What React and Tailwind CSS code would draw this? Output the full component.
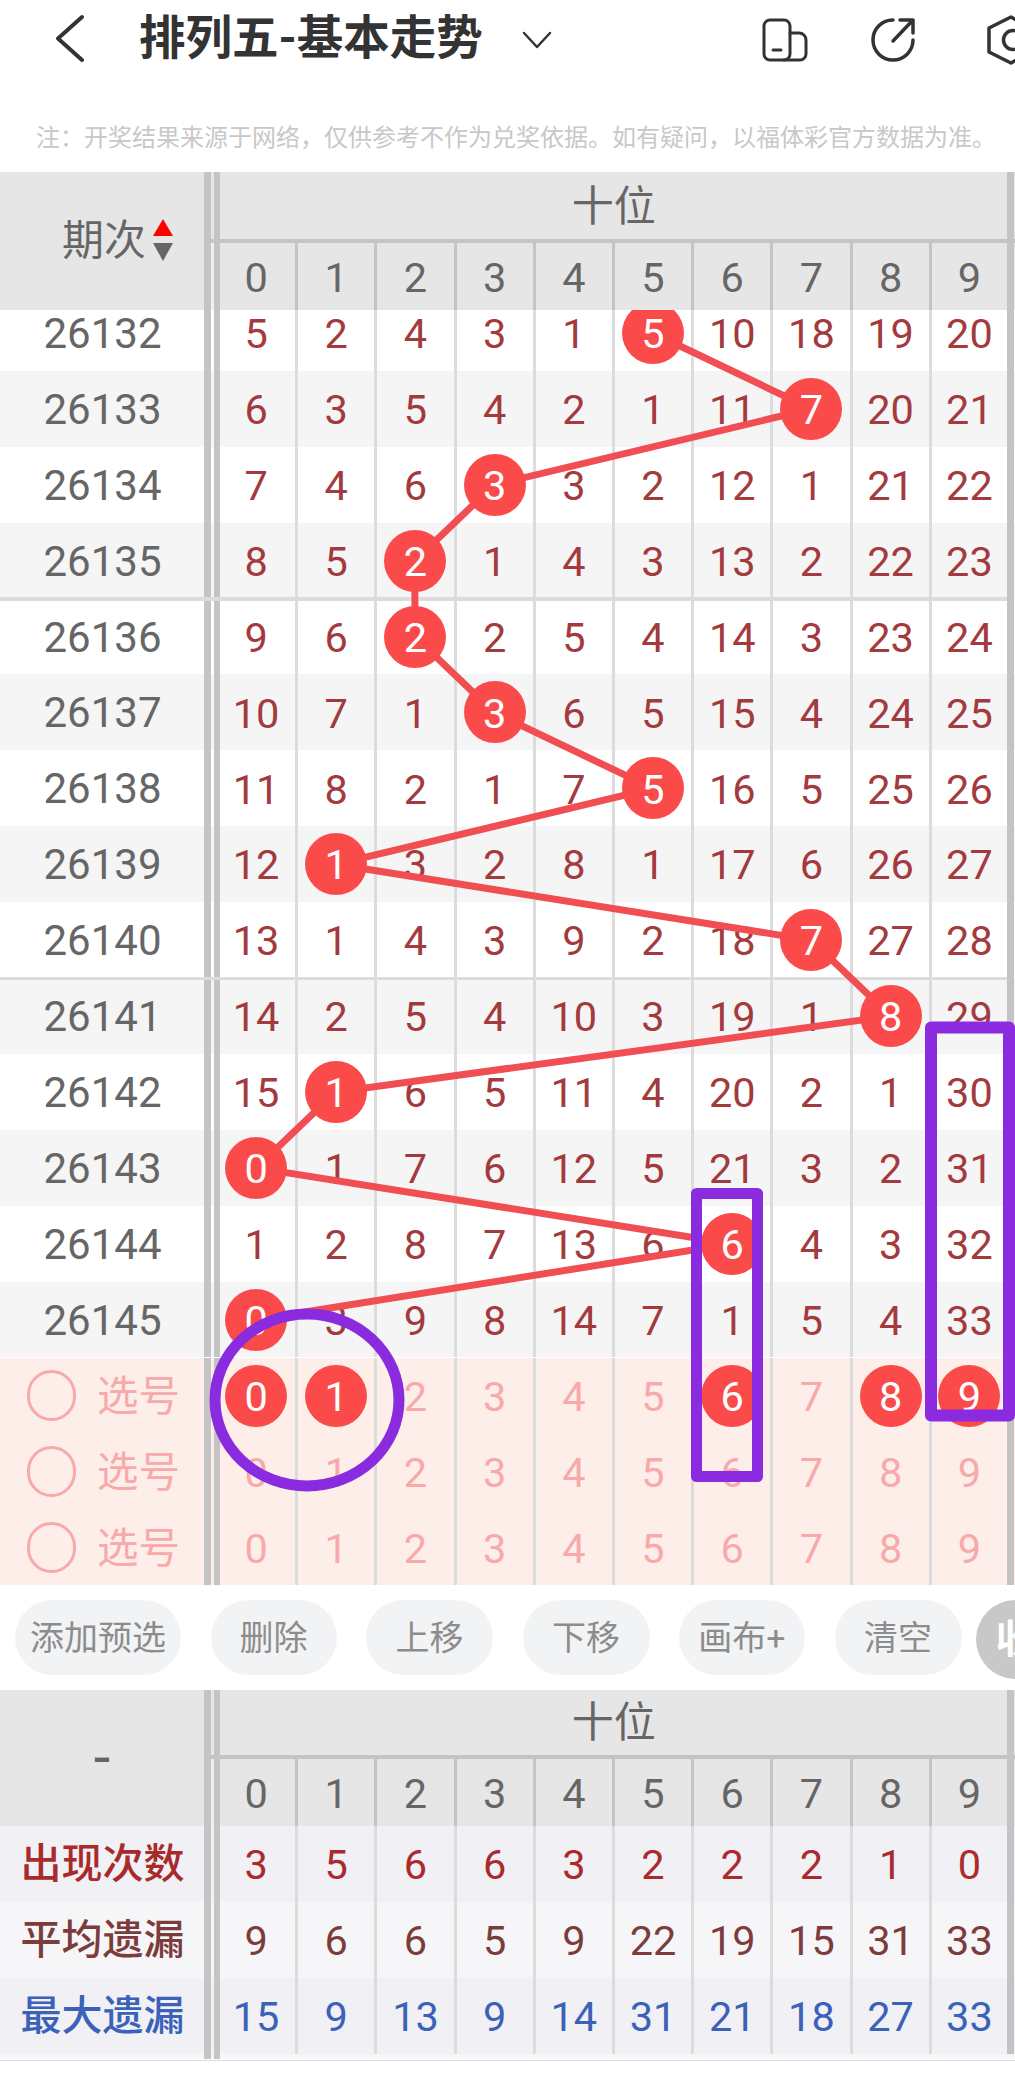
import React from 'react';

const rows = [
  [26132, [5, 2, 4, 3, 1, 5, 10, 18, 19, 20], 5],
  [26133, [6, 3, 5, 4, 2, 1, 11, 7, 20, 21], 7],
  [26134, [7, 4, 6, 3, 3, 2, 12, 1, 21, 22], 3],
  [26135, [8, 5, 2, 1, 4, 3, 13, 2, 22, 23], 2],
  [26136, [9, 6, 2, 2, 5, 4, 14, 3, 23, 24], 2],
  [26137, [10, 7, 1, 3, 6, 5, 15, 4, 24, 25], 3],
  [26138, [11, 8, 2, 1, 7, 5, 16, 5, 25, 26], 5],
  [26139, [12, 1, 3, 2, 8, 1, 17, 6, 26, 27], 1],
  [26140, [13, 1, 4, 3, 9, 2, 18, 7, 27, 28], 7],
  [26141, [14, 2, 5, 4, 10, 3, 19, 1, 8, 29], 8],
  [26142, [15, 1, 6, 5, 11, 4, 20, 2, 1, 30], 1],
  [26143, [0, 1, 7, 6, 12, 5, 21, 3, 2, 31], 0],
  [26144, [1, 2, 8, 7, 13, 6, 6, 4, 3, 32], 6],
  [26145, [0, 3, 9, 8, 14, 7, 1, 5, 4, 33], 0],
];

const digits = [0, 1, 2, 3, 4, 5, 6, 7, 8, 9];

const note = '注\uFF1A开奖结果来源于网络\uFF0C仅供参考不作为兑奖依据。如有疑问\uFF0C以福体彩官方数据为准。';

// trend line through the ball of every row, coords inside the scroll body
const trendPoints = rows
  .map(([, , ball], i) => `${256.3 + 79.3 * ball},${23 + 75.9 * i}`)
  .join(' ');

const Ball = ({ n }) => (
  <span className="relative z-20 flex h-[62px] w-[62px] items-center justify-center rounded-full bg-[#fb4a4a] pt-[2px] text-white">
    {n}
  </span>
);

// the ten number columns of a row
const Cells = ({ nums, ball, balls, text, line }) => (
  <div className={`grid h-full grid-cols-[78.2px_repeat(8,79.2px)_75.5px] ${text}`}>
    {nums.map((n, i) => {
      const isBall = balls ? balls.includes(i) : ball === i;
      return (
        <div
          key={i}
          className={`flex h-full items-center justify-center ${i < 9 ? `border-r-[3px] ${line}` : ''} ${i === 0 ? 'pr-[3px]' : ''}`}
        >
          {isBall ? <Ball n={n} /> : <span className="pt-[2px]">{n}</span>}
        </div>
      );
    })}
  </div>
);

// double bar between label column and numbers, plus the bar on the right
const Row = ({ label, bg, children }) => (
  <div className={`flex h-[75.9px] ${bg}`}>
    <div className="w-[204px] shrink-0">{label}</div>
    <div className="h-full w-[6.5px] shrink-0 bg-[#c4c4c4]" />
    <div className="h-full w-[3.5px] shrink-0" />
    <div className="h-full w-[6px] shrink-0 bg-[#c4c4c4]" />
    <div className="w-[787.3px] shrink-0">{children}</div>
    <div className="h-full w-[7px] shrink-0 bg-[#c4c4c4]" />
  </div>
);

const TableHead = ({ left, topH }) => (
  <div className="flex bg-[#e6e6e6]">
    <div className="w-[204px] shrink-0">{left}</div>
    <div className="w-[6.5px] shrink-0 bg-[#c4c4c4]" />
    <div className="flex-1">
      <div className={`flex ${topH}`}>
        <div className="w-[3.5px] shrink-0" />
        <div className="w-[6px] shrink-0 bg-[#c4c4c4]" />
        <div className="flex w-[787.3px] shrink-0 items-center justify-center pt-[2px] text-[42px] text-[#666]">十位</div>
        <div className="w-[7px] shrink-0 bg-[#c4c4c4]" />
      </div>
      <div className="h-[4px] bg-[#c4c4c4]" />
      <div className="flex h-[67px]">
        <div className="w-[3.5px] shrink-0 bg-[#f0f0f0]" />
        <div className="w-[6px] shrink-0 bg-[#c4c4c4]" />
        <div className="w-[787.3px] shrink-0">
          <Cells nums={digits} text="text-[#666]" line="border-[#c4c4c4]" />
        </div>
        <div className="w-[7px] shrink-0 bg-[#c4c4c4]" />
      </div>
    </div>
  </div>
);

const Pill = ({ w, children }) => (
  <div className={`flex h-[75px] shrink-0 items-center justify-center rounded-full bg-[#f2f3f5] text-[34px] text-[#8c8c8c] ${w}`}>
    {children}
  </div>
);

const StatRow = ({ label, labelColor, nums, text, bg }) => (
  <Row
    bg={bg}
    label={<div className={`flex h-full items-center justify-center pl-[1px] pt-[2px] text-[41px] font-medium ${labelColor}`}>{label}</div>}
  >
    <Cells nums={nums} text={text} line="border-[#dcdcdc]" />
  </Row>
);

const App = () => {
  return (
    <div className="relative h-[2074px] w-[1015px] overflow-hidden bg-white text-[41.5px] leading-none [font-family:Roboto,'Noto_Sans_CJK_SC',sans-serif]">
      {/* top bar */}
      <div className="flex h-[76px] items-center overflow-hidden pl-[56px]">
        <svg width="28" height="49" viewBox="0 0 28 49" fill="none" stroke="#333" strokeWidth="4" strokeLinecap="round" strokeLinejoin="round" className="shrink-0">
          <path d="M26 3 L2 24.500 L26 46" />
        </svg>
        <div className="ml-[55px] w-[343px] shrink-0 whitespace-nowrap text-[46.5px] font-bold text-[#333]">排列五-基本走势</div>
        <svg width="30" height="18" viewBox="0 0 30 18" fill="none" stroke="#333" strokeWidth="2.500" strokeLinecap="round" strokeLinejoin="round" className="ml-[40px] mt-[3px] shrink-0">
          <path d="M2 2 L15 16 L28 2" />
        </svg>
        <svg width="46" height="44" viewBox="0 0 46 44" fill="none" stroke="#333" strokeWidth="3" strokeLinecap="round" strokeLinejoin="round" className="ml-[210px] mt-[3px] shrink-0">
          <rect x="2" y="2" width="26" height="40" rx="6" />
          <path d="M28 15 H37 A7 7 0 0 1 44 22 V36 A6 6 0 0 1 38 42 H22" />
          <path d="M11 32 H19" />
        </svg>
        <svg width="46" height="46" viewBox="0 0 46 46" fill="none" stroke="#333" strokeWidth="3.500" strokeLinecap="round" strokeLinejoin="round" className="ml-[62px] mt-[3px] shrink-0">
          <path d="M23 3 A20 20 0 1 0 43 23" />
          <path d="M23 24 L43 3 M30 3 H43 V16" />
        </svg>
        <svg width="50" height="50" viewBox="0 0 50 50" fill="none" stroke="#333" strokeWidth="3.500" strokeLinecap="round" strokeLinejoin="round" className="ml-[70px] mt-[3px] shrink-0">
          <path d="M25 2 L45 13 V37 L25 48 L3 37 V13 Z" />
          <circle cx="27" cy="25" r="9.500" />
        </svg>
      </div>

      {/* disclaimer */}
      <div className="flex h-[96px] items-start whitespace-nowrap pl-[36px] pt-[50px] text-[24px] text-[#c8c8c8]">
        {note}
      </div>

      <TableHead
        topH="h-[67px]"
        left={
          <div className="flex h-full items-center pl-[62px] text-[42px] text-[#666]">
            <span>期次</span>
            <svg width="22" height="44" viewBox="0 0 22 44" className="ml-[6px] shrink-0">
              <path d="M11 0 L21 17 H1 Z" fill="#f00" />
              <path d="M1 24 H21 L11 42 Z" fill="#666" />
            </svg>
          </div>
        }
      />

      {/* scrolled history rows, first row is cut by the header */}
      <div className="relative h-[1047.700px] overflow-hidden">
        <div className="-mt-[15px]">
          {rows.map(([issue, nums, ball], i) => (
            <div key={issue} className="relative">
              <Row
                bg={i % 2 === 0 ? 'bg-white' : 'bg-[#f5f5f5]'}
                label={<div className="flex h-full items-center justify-center pl-[1px] pt-[2px] text-[42px] text-[#666]">{issue}</div>}
              >
                <Cells nums={nums} ball={ball} text="text-[#a33a3e]" line="border-[#dcdcdc]" />
              </Row>
              {(i === 3 || i === 8) && <div className="absolute -bottom-[2px] left-0 z-[1] h-[3.500px] w-[1007px] bg-[#dcdcdc]" />}
            </div>
          ))}
        </div>
        <svg className="pointer-events-none absolute left-0 top-0 z-10" width="1015" height="1048" viewBox="0 0 1015 1048" fill="none">
          <polyline points={trendPoints} stroke="#f04e52" strokeWidth="7" />
        </svg>
      </div>

      {/* picker rows */}
      {[[0, 1, 6, 8, 9], [], []].map((balls, i) => (
        <Row
          key={i}
          bg="bg-[#fdeee9]"
          label={
            <div className="flex h-full items-center pl-[27px] text-[41.5px] text-[#f8a9a9]">
              <span className="h-[51px] w-[49px] shrink-0 rounded-full border-[3px] border-[#f8a9a9]" />
              <span className="ml-[21px] pt-[2px]">选号</span>
            </div>
          }
        >
          <Cells nums={digits} balls={balls} text="text-[#f8a9a9]" line="border-[#dcdcdc]" />
        </Row>
      ))}

      {/* action buttons */}
      <div className="flex h-[104.600px] items-start gap-[29.500px] overflow-hidden pl-[15px] pt-[15px]">
        <Pill w="w-[166px]">添加预选</Pill>
        <Pill w="w-[126px]">删除</Pill>
        <Pill w="w-[127px]">上移</Pill>
        <Pill w="w-[127px]">下移</Pill>
        <Pill w="w-[126px]">画布+</Pill>
        <Pill w="w-[127px]">清空</Pill>
        <div className="-ml-[15px] flex h-[79px] w-[79px] shrink-0 items-center justify-center rounded-full bg-[#c8c8c8] text-[40px] font-bold text-white">收</div>
      </div>

      <TableHead
        topH="h-[65px]"
        left={<div className="flex h-full items-center justify-center text-[60px] text-[#666]">-</div>}
      />

      <StatRow label="出现次数" labelColor="text-[#a82a2a]" nums={[3, 5, 6, 6, 3, 2, 2, 2, 1, 0]} text="text-[#ab2a2e]" bg="bg-[#f0f0f5]" />
      <StatRow label="平均遗漏" labelColor="text-[#7d3c3c]" nums={[9, 6, 6, 5, 9, 22, 19, 15, 31, 33]} text="text-[#7d3c3c]" bg="bg-[#f6f6f8]" />
      <StatRow label="最大遗漏" labelColor="text-[#3b62b8]" nums={[15, 9, 13, 9, 14, 31, 21, 18, 27, 33]} text="text-[#3b62b8]" bg="bg-[#f0f0f5]" />
      <div className="flex h-[5px] bg-[#f6f6f8]">
        <div className="w-[204px]" />
        <div className="w-[6.500px] bg-[#c4c4c4]" />
        <div className="w-[3.500px]" />
        <div className="w-[6px] bg-[#c4c4c4]" />
      </div>
      <div className="mt-[1px] h-[1.500px] bg-[#dcdcdc]" />

      {/* hand-drawn purple marks on top of the screenshot */}
      <svg className="pointer-events-none absolute left-0 top-0 z-30" width="1015" height="2074" viewBox="0 0 1015 2074" fill="none" stroke="#8a2be0" strokeLinejoin="round">
        <rect x="696.500" y="1193.500" width="61" height="283" strokeWidth="11" />
        <rect x="931" y="1027.500" width="78" height="388" strokeWidth="12" />
        <ellipse cx="307" cy="1400" rx="92" ry="86" strokeWidth="11" />
      </svg>
    </div>
  );
};

export default App;
